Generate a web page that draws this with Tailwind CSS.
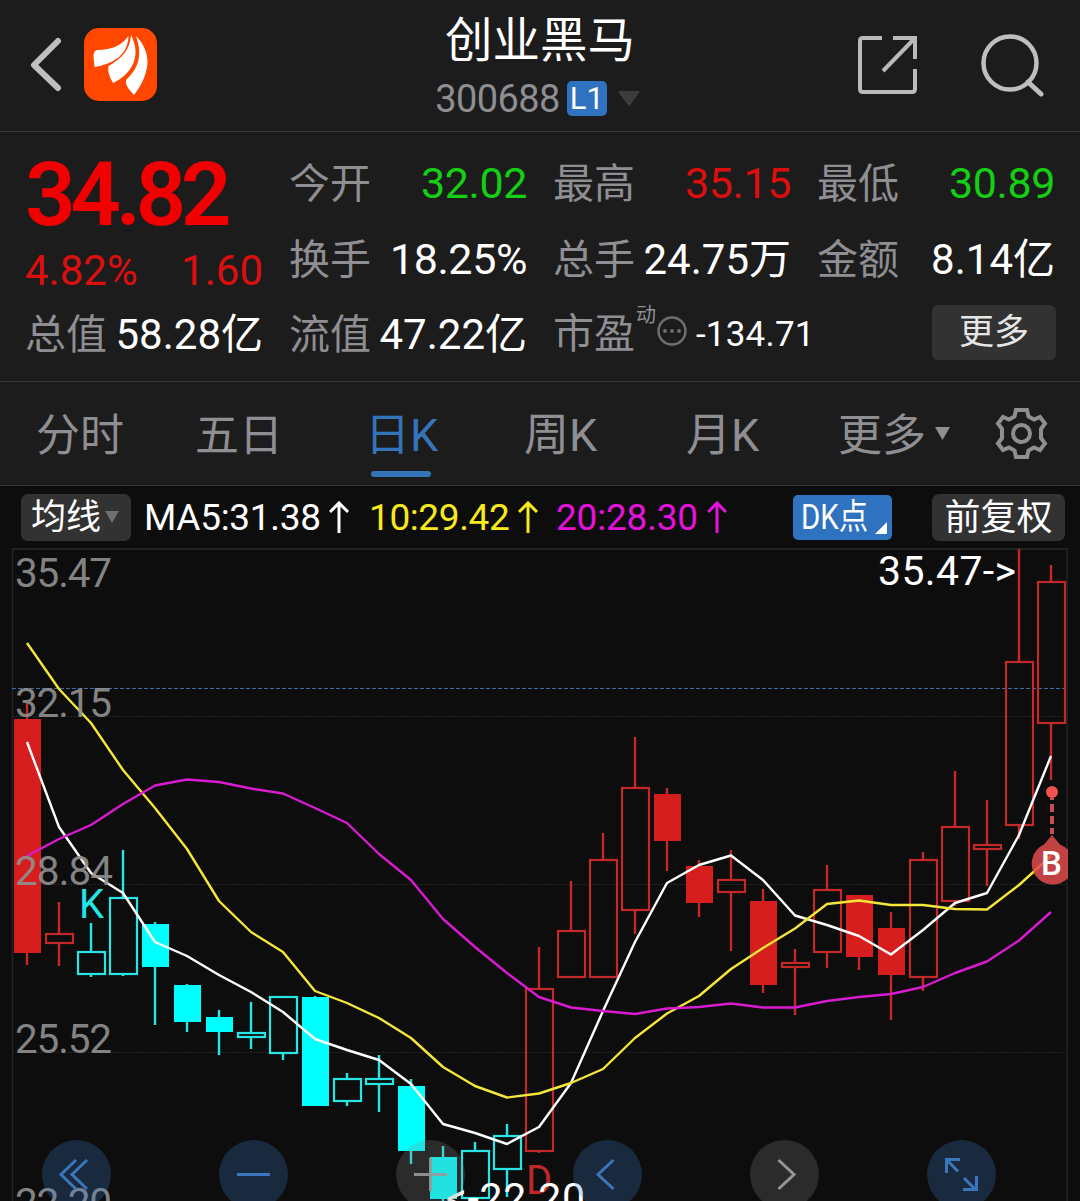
<!DOCTYPE html>
<html lang="zh-CN">
<head>
  <meta charset="UTF-8" />
  <meta name="viewport" content="width=device-width, initial-scale=1.0"/>
  <title>创业黑马 300688</title>
  <script src="https://cdn.jsdelivr.net/npm/@tailwindcss/browser@4"></script>
</head>
<body class="bg-[#0d0d0d] w-[1080px] h-[1201px] overflow-hidden font-[Roboto,'Noto_Sans_CJK_SC',sans-serif] text-white whitespace-nowrap">

  <!-- Header -->
  <header class="h-[132px] bg-[#1c1c1c] border-b border-[#363636] grid grid-cols-[1fr_auto_1fr] items-center">
    <div class="flex items-center pl-[28px] gap-[21px] pb-[2px]">
      <svg class="w-[35px] h-[56px]" viewBox="0 0 35 56" fill="none" stroke="#bfbfbf" stroke-width="6" stroke-linecap="round" stroke-linejoin="round"><path d="M30 4 6 28 30 51"/></svg>
      <svg class="w-[73px] h-[73px]" viewBox="0 0 73 73">
        <rect width="73" height="73" rx="15" fill="#ff4700"/>
        <g fill="#fff">
          <path d="M44.500 8C38 17 28 22 13 22Q9.500 23 9.500 28L10.500 39C28 36 44 28 44.500 8Z"/>
          <path d="M47 7C46 22 38 30 24.500 38Q23 45 29 55C48 46 58 28 47 7Z"/>
          <path d="M52 8C60 16 64 26 63.500 36C62 48 57 58 50 67C46 62 41 58 42 52C54 41 59 28 52 8Z"/>
        </g>
      </svg>
    </div>
    <div class="flex flex-col items-center">
      <h1 class="text-[47.5px] leading-[60px] font-normal mt-[3px]">创业黑马</h1>
      <div class="flex items-center h-[50px] gap-[7px] mt-[2px] -ml-[5px]">
        <span class="text-[38px] leading-[50px] pt-px tracking-[-0.6px] text-[#8e8e93]">300688</span>
        <span class="w-[40px] h-[35px] rounded-[5px] bg-[#2f73c0] text-[31px] leading-[35px] text-center">L1</span>
        <svg class="w-[22px] h-[15px] ml-[4px]" viewBox="0 0 22 15"><path d="M1 0h20q1 1 0 2L12 14q-1 1-2 0L1 2q-1-1 0-2z" fill="#3c3c3c"/></svg>
      </div>
    </div>
    <div class="flex items-center justify-end pr-[35px] gap-[64px] pb-[2px]">
      <svg class="w-[59px] h-[60px]" viewBox="0 0 59 60" fill="none" stroke="#bababa" stroke-width="4"><path d="M24 3H5Q2 3 2 6V54Q2 57 5 57H54Q57 57 57 54V34M35 3H57V24M57 3 25 36"/></svg>
      <svg class="w-[64px] h-[64px]" viewBox="0 0 64 64" fill="none" stroke="#bfbfbf" stroke-width="4.5" stroke-linecap="round"><circle cx="29" cy="30" r="26.500"/><path d="M47 49 60 61" stroke-width="5"/></svg>
    </div>
  </header>

  <!-- Quote -->
  <section class="h-[250px] bg-[#1c1c1c] border-b border-[#363636] pt-[14px] px-[25px] text-[41px] leading-[75px]">
    <div class="grid grid-cols-[238px_238px_238px_238px] gap-x-[26px]">
      <div class="row-span-2 text-[#dc0f0f]">
        <div class="text-[89px] leading-[98px] font-semibold tracking-[-5.5px] text-[#f00000]">34.82</div>
        <div class="flex justify-between leading-[53px] text-[42px]"><span>4.82%</span><span>1.60</span></div>
      </div>
      <div class="flex justify-between"><span class="pt-px -mb-px text-[#8e8e93]">今开</span><span class="text-[43px] tracking-[-0.4px] text-[#15cf15]">32.02</span></div>
      <div class="flex justify-between"><span class="pt-px -mb-px text-[#8e8e93]">最高</span><span class="text-[43px] tracking-[-0.4px] text-[#dc0f0f]">35.15</span></div>
      <div class="flex justify-between"><span class="pt-px -mb-px text-[#8e8e93]">最低</span><span class="text-[43px] tracking-[-0.4px] text-[#15cf15]">30.89</span></div>

      <div class="flex justify-between"><span class="pt-px -mb-px text-[#8e8e93]">换手</span><span class="text-[43px] tracking-[-0.4px]">18.25%</span></div>
      <div class="flex justify-between"><span class="pt-px -mb-px text-[#8e8e93]">总手</span><span class="text-[42px]">24.75万</span></div>
      <div class="flex justify-between"><span class="pt-px -mb-px text-[#8e8e93]">金额</span><span class="text-[42px]">8.14亿</span></div>

      <div class="flex justify-between"><span class="pt-px -mb-px text-[#8e8e93]">总值</span><span class="text-[42px]">58.28亿</span></div>
      <div class="flex justify-between"><span class="pt-px -mb-px text-[#8e8e93]">流值</span><span class="text-[42px]">47.22亿</span></div>
      <div class="flex items-center">
        <span class="text-[#8e8e93]">市盈</span>
        <span class="text-[20px] leading-[24px] text-[#8e8e93] self-start mt-[6px] ml-[1px]">动</span>
        <svg class="w-[30px] h-[30px] -mt-[8px] ml-px shrink-0" viewBox="0 0 30 30" fill="none" stroke="#6e6e6e" stroke-width="2.5"><circle cx="15" cy="15" r="13.500"/><g fill="#6e6e6e" stroke="none"><circle cx="8" cy="15" r="2"/><circle cx="15" cy="15" r="2"/><circle cx="22" cy="15" r="2"/></g></svg>
        <span class="text-[35px] tracking-[0.2px] ml-[9px]">-134.71</span>
      </div>
      <div class="flex items-center justify-end">
        <button class="w-[124px] h-[55px] -mt-[5px] -mr-[1px] rounded-[6px] bg-[#323232] text-[35px] leading-[55px] text-[#e6e6e6]">更多</button>
      </div>
    </div>
  </section>

  <!-- Period tabs -->
  <nav class="h-[104px] bg-[#1c1c1c] border-b border-[#363636] flex items-start text-[44px] leading-[108px] text-[#8e8e93]">
    <span class="w-[160px] pl-[36px]">分时</span>
    <span class="w-[171px] pl-[35px]">五日</span>
    <span class="w-[158px] pl-[34px] text-[45px] leading-[107px] text-[#3574ba] relative">日K<i class="absolute left-[40px] top-[89px] w-[60px] h-[6px] rounded-full bg-[#3574ba]"></i></span>
    <span class="w-[162px] pl-[35px] text-[45px] leading-[107px]">周K</span>
    <span class="w-[151px] pl-[35px] text-[45px] leading-[107px]">月K</span>
    <span class="w-[193px] pl-[36px] flex items-center gap-[9px]">更多<svg class="w-[15px] h-[13px] -mt-[5px]" viewBox="0 0 15 13"><path d="M0 0h15L7.500 13z" fill="#8e8e93"/></svg></span>
    <svg class="w-[53px] h-[53px] mt-[25px]" viewBox="0 0 53 53" fill="none" stroke="#8e8e93" stroke-width="4">
      <path d="M21 3h11l1.500 6.500 5.500 3 6-2.500 5 6.500-4 5.500v9l4 5.500-5 6.500-6-2.500-5.500 3-1.500 6.500H21l-1.500-6.500-5.500-3-6 2.500-5-6.500 4-5.500v-9l-4-5.500 5-6.500 6 2.500 5.500-3z"/>
      <circle cx="26.500" cy="26.500" r="8.500"/>
    </svg>
  </nav>

  <!-- Indicator bar -->
  <div class="h-[62px] flex items-center text-[37px] leading-[46px] pl-[21px] pr-[15px]">
    <div class="w-[110px] h-[47px] rounded-[7px] bg-[#323232] flex items-center pl-[10px] gap-[4px] text-[35px]"><span class="pt-[2px]">均线</span><svg class="w-[14px] h-[12px]" viewBox="0 0 14 12"><path d="M0 0h14L7 12z" fill="#707070"/></svg></div>
    <div class="flex items-center ml-[13px] w-[225px] gap-[9px] tracking-[-0.3px]"><span class="w-[176px] pt-[2px]">MA5:31.38</span><svg class="w-[20px] h-[32px]" viewBox="0 0 20 32" fill="none" stroke="currentColor" stroke-width="3"><path d="M10 32V2M1 11l9-9 9 9"/></svg></div>
    <div class="flex items-center w-[187px] gap-[9px] tracking-[-0.4px] text-[#f8ea1c]"><span class="w-[140px] pt-[2px]">10:29.42</span><svg class="w-[20px] h-[32px]" viewBox="0 0 20 32" fill="none" stroke="currentColor" stroke-width="3"><path d="M10 32V2M1 11l9-9 9 9"/></svg></div>
    <div class="flex items-center w-[237px] gap-[9px] tracking-[-0.2px] text-[#e612dc]"><span class="w-[142px] pt-[2px]">20:28.30</span><svg class="w-[20px] h-[32px]" viewBox="0 0 20 32" fill="none" stroke="currentColor" stroke-width="3"><path d="M10 32V2M1 11l9-9 9 9"/></svg></div>
    <div class="w-[99px] h-[45px] rounded-[5px] bg-[#2f73c0] flex items-end pl-[8px]"><span class="w-[74px] origin-left scale-x-[0.84] leading-[45px] text-[35px]">DK点</span><svg class="w-[12px] h-[12px] mb-[6px]" viewBox="0 0 12 12"><path d="M12 0v12H0z" fill="#fff"/></svg></div>
    <div class="w-[133px] h-[47px] ml-auto rounded-[7px] bg-[#323232] text-center text-[36px] leading-[49px]">前复权</div>
  </div>

  <!-- K-line chart -->
  <div class="relative h-[653px]">
    <svg id="chart" class="block w-[1080px] h-[653px]" viewBox="0 548 1080 653" fill="none">
      <path d="M12.500 1201V548M1067 1201V548" stroke="#242424" stroke-width="1.500"/>
      <path d="M12 549H1068" stroke="#222" stroke-width="2"/>
      <path d="M13 716.500H1067M13 884.500H1067M13 1052.500H1067" stroke="#232323" stroke-dasharray="2 1"/>
      <path d="M12 688.500H1067" stroke="#3f6ea3" stroke-dasharray="4 2"/>
      <g id="candles"></g>
      <g id="lines" stroke-width="2.400" stroke-linejoin="round"></g>
      <g font-size="40.500" fill="#909090" fill-opacity="0.92">
        <text x="15" y="587" textLength="97">35.47</text>
        <text x="15" y="717" textLength="97">32.15</text>
        <text x="15" y="885" textLength="98">28.84</text>
        <text x="15" y="1053" textLength="97">25.52</text>
        <text x="15" y="1217" textLength="97">22.20</text>
      </g>
      <text x="79" y="918" font-size="40" fill="#22e6e6">K</text>
      <text x="526" y="1194" font-size="40" fill="#c02828">D</text>
      <g font-size="41" fill="#fff">
        <text x="878" y="585" textLength="138">35.47-&gt;</text>
        <text x="446" y="1212" textLength="139">&lt;-22.20</text>
      </g>
      <g>
        <path d="M1052 798V834" stroke="#c95050" stroke-width="4" stroke-dasharray="8 4" stroke-dashoffset="6"/>
        <circle cx="1052" cy="792" r="6" fill="#ee5253"/>
        <path d="M1052 835L1060 844.500A21 21 0 0 1 1068 850V878A21 21 0 1 1 1044 844.500Z" fill="#e04c4c" fill-opacity="0.86"/>
        <text x="1041" y="875" font-size="33" font-weight="500" fill="#fff">B</text>
      </g>
    </svg>

    <!-- Floating controls -->
    <div class="absolute left-[42px] top-[592px] flex gap-[108px]">
      <div class="w-[69px] h-[69px] rounded-full bg-[#4084d8]/25"><svg viewBox="0 0 69 69" fill="none" stroke="#3a76bb" stroke-width="3"><path d="M34 20 19 34.500 34 49M45 20 30 34.500 45 49"/></svg></div>
      <div class="w-[69px] h-[69px] rounded-full bg-[#4084d8]/25"><svg viewBox="0 0 69 69" fill="none" stroke="#3a76bb" stroke-width="3"><path d="M18 34.500H51"/></svg></div>
      <div class="w-[69px] h-[69px] rounded-full bg-[#888]/25"><svg viewBox="0 0 69 69" fill="none" stroke="#999" stroke-opacity="0.9" stroke-width="3"><path d="M18 34.500H51M34.500 18V51"/></svg></div>
      <div class="w-[69px] h-[69px] rounded-full bg-[#4084d8]/25"><svg viewBox="0 0 69 69" fill="none" stroke="#3a76bb" stroke-width="3"><path d="M40.500 20 25 34.500 40.500 49"/></svg></div>
      <div class="w-[69px] h-[69px] rounded-full bg-[#888]/25"><svg viewBox="0 0 69 69" fill="none" stroke="#949494" stroke-width="3"><path d="M28.500 20 44 34.500 28.500 49"/></svg></div>
      <div class="w-[69px] h-[69px] rounded-full bg-[#4084d8]/25"><svg viewBox="0 0 69 69" fill="none" stroke="#3a76bb" stroke-width="3"><path d="M33 19.500H19.500V33M20 20 31 31.500M37 38 49 50M49.500 36V49.500H36"/></svg></div>
    </div>
  </div>

  <script>
    // [high, body top, body bottom, low, filled]
    const candles = [
      [703, 719, 953, 965, 1], [902, 934, 943, 966, 0], [923, 952, 974, 977, 0], [850, 898, 974, 976, 0],
      [922, 924, 967, 1025, 1], [984, 985, 1022, 1032, 1], [1010, 1017, 1032, 1055, 1], [1002, 1033, 1037, 1049, 0],
      [996, 997, 1053, 1060, 0], [996, 997, 1106, 1106, 1], [1073, 1079, 1101, 1106, 0], [1055, 1079, 1084, 1112, 0],
      [1079, 1086, 1151, 1164, 1], [1146, 1157, 1199, 1201, 1], [1142, 1151, 1198, 1201, 0], [1124, 1136, 1169, 1197, 0],
      [947, 989, 1151, 1153, 0], [881, 931, 977, 977, 0], [833, 860, 977, 977, 0], [737, 788, 910, 934, 0],
      [788, 794, 841, 871, 1], [860, 866, 903, 917, 1], [850, 880, 892, 951, 0], [889, 901, 985, 993, 1],
      [949, 963, 967, 1015, 0], [865, 890, 952, 968, 0], [895, 895, 957, 970, 1], [912, 928, 975, 1020, 1],
      [852, 860, 977, 991, 0], [771, 827, 901, 906, 0], [800, 845, 849, 886, 0], [549, 662, 825, 839, 0],
      [565, 582, 723, 780, 0]
    ];
    const averages = {
      "#fff": [742, 827, 873, 893, 942, 956, 975, 992, 1012, 1039, 1050, 1060, 1084, 1124, 1133, 1144, 1127, 1083, 1011, 942, 883, 865, 855.5, 880, 915.5, 925, 936, 954.5, 930, 903, 893, 835, 756],
      "#f5e63a": [643, 689, 723, 770, 808, 849, 901, 932, 952, 991, 1003, 1018, 1038, 1067, 1086, 1097.5, 1093.5, 1083, 1069, 1038, 1013.5, 996, 969, 948, 928.5, 904, 900.5, 905, 905, 909, 909.5, 885, 856],
      "#d81bd0": [856, 839, 825, 804, 785.5, 779.5, 782, 788.5, 793.5, 808, 823, 854, 880, 919, 947, 973, 997, 1007.5, 1011, 1014, 1008.5, 1007, 1003.5, 1007.5, 1007.5, 1001, 997, 994, 987, 973, 961.5, 940.5, 912]
    };
    const step = 32, start = 27;

    document.getElementById("candles").innerHTML = candles.map(([high, top, bottom, low, filled], i) => {
      const x = start + i * step;
      const cyan = i > 1 && i < 16;
      const stroke = cyan ? "#28e6e6" : "#c42828";
      const fill = cyan ? "#00ffff" : "#d61e1e";
      const body = filled
        ? `<rect x="${x - 13}" y="${top}" width="27" height="${bottom - top}" fill="${fill}"/>`
        : `<rect x="${x - 13}" y="${top}" width="27" height="${bottom - top}" stroke="${stroke}" stroke-width="2.2"/>`;
      return `<path d="M${x} ${high}V${top}M${x} ${bottom}V${low}" stroke="${stroke}" stroke-width="2.4"/>${body}`;
    }).join("");

    document.getElementById("lines").innerHTML = Object.entries(averages).map(([color, ys]) =>
      `<polyline points="${ys.map((y, i) => `${start + i * step},${y}`).join(" ")}" stroke="${color}"/>`
    ).join("");
  </script>
</body>
</html>
